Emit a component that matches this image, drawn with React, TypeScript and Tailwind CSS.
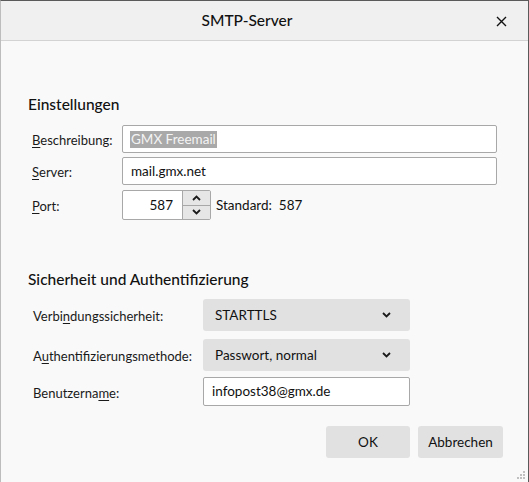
import React from "react";

const font = { fontFamily: 'Lato, "Noto Sans", sans-serif' };

function Chevron({ up = false }: { up?: boolean }) {
  return (
    <svg width="9" height="6" viewBox="0 0 9 6" className="block">
      <polyline
        points={up ? "1,5 4.5,1.5 8,5" : "1,1 4.5,4.5 8,1"}
        fill="none"
        stroke="#1a1a1a"
        strokeWidth="1.8"
      />
    </svg>
  );
}

function Label({ pre, u, post }: { pre: string; u: string; post: string }) {
  return (
    <span className="text-[13px] text-[#1a1a1a] whitespace-nowrap">
      {pre}
      <span className="underline underline-offset-2">{u}</span>
      {post}
    </span>
  );
}

export default function App() {
  return (
    <div
      className="w-[529px] h-[482px] bg-[#f9f9f9] flex flex-col border-t border-r border-[#5a5a5a] border-l border-l-[#bdbdbd] relative overflow-hidden"
      style={font}
    >
      <div className="h-[40px] bg-[#f0f0f0] border-b border-[#d3d3d3] flex items-center justify-center relative shrink-0 pr-[35px]">
        <span className="text-[15.5px] font-medium text-[#111]">SMTP-Server</span>
        <svg
          width="11"
          height="11"
          viewBox="0 0 11 11"
          className="absolute right-[21px] top-[15px]"
        >
          <path d="M1 1L10 10M10 1L1 10" stroke="#111" strokeWidth="1.4" />
        </svg>
      </div>

      <div className="flex flex-col pl-[27px]">
        <div className="mt-[53px] h-[20px] leading-[20px] text-[15.5px] font-medium text-[#111]">
          Einstellungen
        </div>

        <div className="mt-[11px] flex items-center h-[28px]">
          <div className="w-[94px] pl-[4px]">
            <Label pre="" u="B" post="eschreibung:" />
          </div>
          <div className="w-[375px] h-[28px] border border-[#a8a8a8] rounded-[2px] bg-white flex items-center pl-[7px]">
            <span className="text-[13.5px] text-[#f4f4f4] bg-[#a9a9a9] px-[1px] leading-[17px]">
              GMX Freemail
            </span>
          </div>
        </div>

        <div className="mt-[4px] flex items-center h-[28px]">
          <div className="w-[94px] pl-[4px]">
            <Label pre="" u="S" post="erver:" />
          </div>
          <div className="w-[375px] h-[28px] border border-[#a8a8a8] rounded-[2px] bg-white flex items-center pl-[8px]">
            <span className="text-[13.5px] text-[#111]">mail.gmx.net</span>
          </div>
        </div>

        <div className="mt-[5px] flex items-center h-[30px]">
          <div className="w-[94px] pl-[4px]">
            <Label pre="" u="P" post="ort:" />
          </div>
          <div className="w-[89px] h-[30px] border border-[#a8a8a8] rounded-[2px] bg-white flex items-stretch">
            <div className="flex-1 flex items-center justify-end pr-[9px]">
              <span className="text-[13.5px] text-[#111]">587</span>
            </div>
            <div className="w-[28px] flex flex-col border-l border-[#a8a8a8]">
              <div className="flex-1 bg-[#e6e6e6] border-b border-[#a8a8a8] flex items-center justify-center">
                <Chevron up />
              </div>
              <div className="flex-1 bg-[#e6e6e6] flex items-center justify-center">
                <Chevron />
              </div>
            </div>
          </div>
          <span className="ml-[5px] text-[13.5px] text-[#111] whitespace-pre">Standard:  587</span>
        </div>

        <div className="mt-[49px] h-[20px] leading-[20px] text-[15.5px] font-medium text-[#111]">
          Sicherheit und Authentifizierung
        </div>

        <div className="mt-[10px] flex items-center h-[32px]">
          <div className="w-[175px] pl-[5px]">
            <Label pre="Verbi" u="n" post="dungssicherheit:" />
          </div>
          <div className="w-[207px] h-[32px] bg-[#e1e1e1] rounded-[3px] flex items-center justify-between pl-[12px] pr-[19px]">
            <span className="text-[13.5px] text-[#111]">STARTTLS</span>
            <Chevron />
          </div>
        </div>

        <div className="mt-[8px] flex items-center h-[32px]">
          <div className="w-[175px] pl-[5px]">
            <Label pre="A" u="u" post="thentifizierungsmethode:" />
          </div>
          <div className="w-[207px] h-[32px] bg-[#e1e1e1] rounded-[3px] flex items-center justify-between pl-[12px] pr-[19px]">
            <span className="text-[13.5px] text-[#111]">Passwort, normal</span>
            <Chevron />
          </div>
        </div>

        <div className="mt-[6px] flex items-center h-[29px]">
          <div className="w-[175px] pl-[5px]">
            <Label pre="Benutzerna" u="m" post="e:" />
          </div>
          <div className="w-[207px] h-[29px] border border-[#a8a8a8] rounded-[2px] bg-white flex items-center pl-[8px]">
            <span className="text-[13.5px] text-[#111]">infopost38@gmx.de</span>
          </div>
        </div>
      </div>

      <div className="mt-[20px] flex justify-end gap-[8px] pr-[25px]">
        <div className="w-[84px] h-[32px] bg-[#e1e1e1] rounded-[3px] flex items-center justify-center text-[13.5px] text-[#111]">
          OK
        </div>
        <div className="w-[85px] h-[32px] bg-[#e1e1e1] rounded-[3px] flex items-center justify-center text-[13.5px] text-[#111]">
          Abbrechen
        </div>
      </div>

      <svg width="10" height="10" viewBox="0 0 10 10" className="absolute right-[2px] bottom-[2px]">
        <rect x="7" y="1" width="2" height="2" fill="#c0c0c0" />
        <rect x="4" y="4" width="2" height="2" fill="#c0c0c0" />
        <rect x="7" y="4" width="2" height="2" fill="#c0c0c0" />
        <rect x="1" y="7" width="2" height="2" fill="#c0c0c0" />
        <rect x="4" y="7" width="2" height="2" fill="#c0c0c0" />
        <rect x="7" y="7" width="2" height="2" fill="#c0c0c0" />
      </svg>
    </div>
  );
}
